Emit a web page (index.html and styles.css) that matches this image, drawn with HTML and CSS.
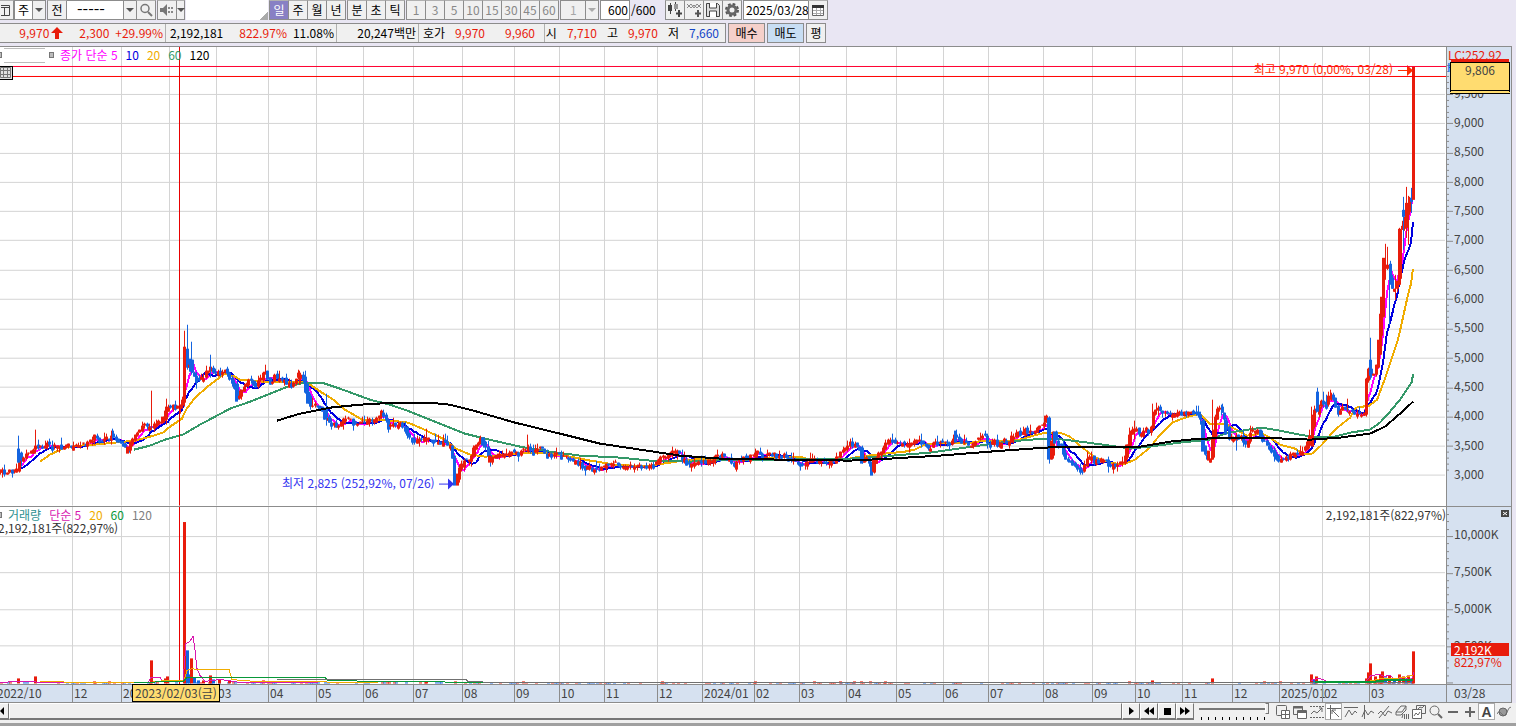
FILE: index.html
```html
<!DOCTYPE html>
<html lang="ko">

<head>
    <meta charset="UTF-8">
    <meta name="viewport" content="width=device-width, initial-scale=1.0">
    <title>종합차트</title>
    <link rel="stylesheet" href="styles.css">
</head>

<body>
    <div class="toolbar">
        <button class="btn half" aria-label="창"><svg width="12" height="14"><path d="M0 2.500H8.500V12.500H0M0 4.500H8M3.500 4V12" fill="none" stroke="#444"/></svg></button>
        <div class="group">
            <label class="combo combo-week"><select aria-label="종목 구분"><option>주</option></select><i class="arrow"></i></label>
        </div>
        <button class="btn">전</button>
        <div class="group code-group">
            <label class="combo combo-code"><select aria-label="종목 코드"><option>-----</option></select><i class="arrow"></i></label>
            <button class="btn" aria-label="검색"><svg width="14" height="14"><circle cx="6" cy="5.500" r="4" fill="none" stroke="#777" stroke-width="1.500"/><path d="M9 9l4 4" stroke="#777" stroke-width="2"/></svg></button>
        </div>
        <div class="group sound-group">
            <button class="btn" aria-label="소리"><svg width="14" height="14"><path d="M0 5h3l4-4v12l-4-4H0z" fill="#777"/><path d="M9 4v2M9 8v2M12 4v2M12 8v2" stroke="#888" stroke-width="2"/></svg></button>
            <button class="btn thin" aria-label="소리 선택"><i class="arrow"></i></button>
        </div>
        <div class="name-box"></div>
        <div class="group">
            <button class="btn on">일</button><button class="btn">주</button><button class="btn">월</button><button class="btn">년</button>
        </div>
        <div class="group">
            <button class="btn">분</button><button class="btn">초</button><button class="btn">틱</button>
        </div>
        <div class="group minutes">
            <button class="btn">1</button><button class="btn">3</button><button class="btn">5</button><button class="btn">10</button><button class="btn">15</button><button class="btn">30</button><button class="btn">45</button><button class="btn">60</button>
        </div>
        <label class="combo combo-tick"><select aria-label="분 선택" disabled><option>1</option></select><i class="arrow"></i></label>
        <div class="count">
            <input type="text" id="count" value="600"><label for="count">/600</label>
        </div>
        <div class="group icons">
            <button class="btn" aria-label="차트 종류"><svg width="16" height="16"><path d="M3.500 1v11M8.500 0v9" stroke="#444"/><path d="M2 3h3v6H2zM1 3h4v6H1z" fill="#444"/><path d="M7 2h4v5H7z" fill="#999"/><path d="M12 8v7M9 11.500h6" stroke="#444" stroke-width="2"/></svg></button><button class="btn" aria-label="지표 추가"><svg width="16" height="16"><path d="M1 6l4-4 3 4 3-4 4 4M1 2l4 4 3-3 3 3 4-4" fill="none" stroke="#888"/><path d="M12 8v7M9 11.500h6" stroke="#555" stroke-width="2"/></svg></button><button class="btn" aria-label="저장"><svg width="16" height="16"><path d="M1.500 1.500h11l2 2v11h-13z" fill="#ddd" stroke="#444"/><path d="M4.500 1v5h7V1M4.500 15V9h7v6" fill="#fff" stroke="#444"/></svg></button><button class="btn" aria-label="설정"><svg width="16" height="16"><circle cx="8" cy="8" r="6" fill="none" stroke="#555" stroke-width="2" stroke-dasharray="2.700 2"/><circle cx="8" cy="8" r="4" fill="none" stroke="#666" stroke-width="3"/></svg></button>
        </div>
        <div class="group date-group">
            <input type="text" class="date" aria-label="날짜" value="2025/03/28"><button class="btn" aria-label="달력"><svg width="14" height="14"><path d="M1.500 2.500h11v10h-11z" fill="#fff" stroke="#666"/><path d="M1 3.500h12" stroke="#333" stroke-width="3"/><path d="M2 7.500h10M2 10.500h10M5.500 5v7M9.500 5v7" stroke="#aaa"/></svg></button>
        </div>
    </div>

    <div class="quote">
        <div class="quote-box">
            <div class="cell cell-price"><b class="up">9,970</b><svg class="up-arrow" width="12" height="13"><path d="M6 0l6 6H8v6H4V6H0z" fill="#e81c0c"/></svg><b class="up">2,300</b><b class="up">+29.99%</b></div>
            <div class="cell cell-volume"><b>2,192,181</b><b class="up">822.97%</b><b>11.08%</b></div>
            <div class="cell cell-amount"><b>20,247백만</b></div>
            <div class="cell cell-ask"><b>호가</b><b class="up">9,970</b><b class="up">9,960</b></div>
            <div class="cell cell-ohlc"><b>시</b><b class="up">7,710</b><b>고</b><b class="up">9,970</b><b>저</b><b class="down">7,660</b></div>
        </div>
        <button class="trade buy">매수</button>
        <button class="trade sell">매도</button>
        <button class="trade avg">평</button>
    </div>

    <main class="chart">
        <section class="panel price">
            <div class="plot">
                <svg id="price" viewBox="0 47 1446 459" preserveAspectRatio="none"></svg>
                <div class="legend">
                    <i class="sq"></i><span class="blank"></span><i class="sq"></i>
                    <span class="m5">종가 단순 5</span><span class="m10">10</span><span class="m20">20</span><span class="m60">60</span><span>120</span>
                </div>
                <button class="grid-btn" aria-label="표"><svg width="11" height="11"><path d="M.500 .500h10v10H.500zM0 3.500h11M0 7.500h11M3.500 0v11M7.500 0v11" fill="none" stroke="#777"/></svg></button>
                <div class="note high">최고 9,970 (0,00%, 03/28)</div>
                <div class="note low">최저 2,825 (252,92%, 07/26)</div>
            </div>
            <div class="axis">
                <svg id="priceTicks" viewBox="0 47 8 459" preserveAspectRatio="none"></svg>
                <div class="labels price-labels">
                    <span>9,500</span><span>9,000</span><span>8,500</span><span>8,000</span><span>7,500</span><span>7,000</span><span>6,500</span><span>6,000</span><span>5,500</span><span>5,000</span><span>4,500</span><span>4,000</span><span>3,500</span><span>3,000</span>
                </div>
                <div class="lc">LC:252.92</div>
                <div class="hc">HC</div>
                <div class="last">9,970</div>
                <div class="cursor-price">9,806</div>
            </div>
        </section>

        <section class="panel volume">
            <div class="plot">
                <svg id="volume" viewBox="0 507 1446 177" preserveAspectRatio="none"></svg>
                <div class="legend">
                    <i class="sq"></i><span class="vname">거래량</span><span class="v5">단순 5</span><span class="m20">20</span><span class="v60">60</span><span class="v120">120</span>
                </div>
                <div class="vol-text left">2,192,181주(822,97%)</div>
                <div class="vol-text right">2,192,181주(822,97%)</div>
            </div>
            <div class="axis">
                <svg id="volumeTicks" viewBox="0 507 8 177" preserveAspectRatio="none"></svg>
                <div class="labels volume-labels">
                    <span>10,000K</span><span>7,500K</span><span>5,000K</span><span>2,500K</span>
                </div>
                <button class="close" aria-label="닫기"><svg width="8" height="7"><path d="M2 2l4 3M6 2L2 5" stroke="#fff"/></svg></button>
                <div class="vol-last">2,192K</div>
                <div class="vol-rate">822,97%</div>
            </div>
        </section>

        <section class="time">
            <div class="months">
                <span>2022/10</span><span>12</span><span>2023</span><span>02</span><span>03</span><span>04</span><span>05</span><span>06</span><span>07</span><span>08</span><span>09</span><span>10</span><span>11</span><span>12</span><span>2024/01</span><span>02</span><span>03</span><span>04</span><span>05</span><span>06</span><span>07</span><span>08</span><span>09</span><span>10</span><span>11</span><span>12</span><span>2025/01</span><span>02</span><span>03</span>
                <div class="cursor-date">2023/02/03(금)</div>
            </div>
            <div class="today">03/28</div>
        </section>
    </main>

    <footer class="bottom">
        <button class="scroll-left" aria-label="왼쪽"><svg width="6" height="8"><path d="M4 0v8L0 4z"/></svg></button>
        <div class="thumb"></div>
        <div class="play">
            <button aria-label="재생"><svg width="12" height="10"><path d="M4 1l5 4-5 4z"/></svg></button><button aria-label="뒤로"><svg width="12" height="10"><path d="M6 1v8L1 5zM11 1v8L6 5z"/></svg></button><button aria-label="정지"><svg width="12" height="10"><path d="M3 2h7v7H3z"/></svg></button><button aria-label="앞으로"><svg width="12" height="10"><path d="M1 1l5 4-5 4zM6 1l5 4-5 4z"/></svg></button>
        </div>
        <div class="speed">
            <input type="range" min="0" max="10" value="10" aria-label="속도">
            <div class="marks"></div>
        </div>
        <div class="tools">
            <button aria-label="새 창"><svg viewBox="0 0 14 14"><rect x=".500" y=".500" width="10" height="10" rx="1"/><path d="M5.500 5.500h8v8h-8zM9.500 6v7M6 9.500h7" fill="#fff"/></svg></button>
            <button aria-label="겹치기"><svg viewBox="0 0 14 14"><path d="M.500 1.500h9v8h-9z"/><path d="M4.500 5.500h9v8h-9z" fill="#fff"/><path d="M0 2.500h10M5 7h8" stroke-width="2"/></svg></button>
            <button aria-label="구간"><svg viewBox="0 0 14 14"><path d="M0 1.500h14M0 12.500h14" stroke-dasharray="2 1"/><path d="M1 9l3-3 3 2 5-5M12 3v4M12 3H9"/></svg></button>
            <button class="on" aria-label="십자선"><svg viewBox="0 0 14 14"><path d="M0 3.500h14M3.500 0v14M5 5l7 7M5 5v4M5 5h4"/></svg></button>
            <button aria-label="수평선"><svg viewBox="0 0 14 14"><path d="M0 2.500h14M1 12l4-7 3 5 3-4 2 2"/></svg></button>
            <button aria-label="수직선"><svg viewBox="0 0 14 14"><path d="M3.500 0v14M1 12l3-7 3 5 3-4 3 2"/></svg></button>
            <button aria-label="추세선"><svg viewBox="0 0 14 14"><path d="M1 13L11 1M0 9l3-3 4 5 3-5 4 2"/></svg></button>
            <button aria-label="모두 지우기"><svg viewBox="0 0 14 14"><path d="M1 7l5-6h5L7 7zM1 7v3h5l5-5V1M9.500 9v5M11.500 9v5M13.500 9v5M7 13l1-4"/></svg></button>
            <button aria-label="겹쳐 보기"><svg viewBox="0 0 14 14"><path d="M4.500 .500h9v8h-9z"/><path d="M.500 4.500h9v9h-9z" fill="#fff"/><path d="M2 11l2-3 2 2 2-3M6 4l2-2 2 1 2-2"/></svg></button>
            <button aria-label="돋보기"><svg viewBox="0 0 14 14"><circle cx="5.500" cy="5.500" r="4.500"/><path d="M9 9l4 4" stroke-width="2"/></svg></button>
            <button aria-label="축소"><svg viewBox="0 0 14 14"><path d="M2 7h10" stroke-width="2"/></svg></button>
            <button aria-label="확대"><svg viewBox="0 0 14 14"><path d="M2 7h10M7 2v10" stroke-width="2"/></svg></button>
            <button class="on letter">A</button>
            <button aria-label="표시"><svg viewBox="0 0 14 14"><circle cx="6" cy="7" r="4" fill="#999"/><path d="M0 9c3-7 6 6 9 0s4-8 5-6"/></svg></button>
        </div>
    </footer>

    <script src="app.js"></script>
</body>

</html>
```
FILE: styles.css
```css
* {
    box-sizing: border-box;
    margin: 0;
    padding: 0;
}

body,
button,
input,
select {
    font-family: "Noto Sans CJK KR", sans-serif;
    font-size: 12px;
    line-height: 16px;
    color: #000;
}

body {
    display: flex;
    flex-direction: column;
    height: 100vh;
    background-color: #e9e6f3;
    overflow: hidden;
}

b {
    font-weight: normal;
}

/* top toolbar */
.toolbar {
    display: flex;
    height: 20px;
    gap: 1px;
}

.group,
.combo,
.count {
    display: flex;
    height: 20px;
}

.btn {
    display: flex;
    align-items: center;
    justify-content: center;
    flex: none;
    width: 20px;
    height: 20px;
    margin-right: -1px;
    background-color: #f0f0f0;
    border: 1px solid #8c8c8c;
    border-top-color: #b0b0b0;
}

.btn.on {
    background-color: #8880c4;
    color: #fff;
}

.half {
    width: 14px;
    border-left: 0;
}

.thin {
    width: 9px;
}

.group .btn:last-child {
    margin-right: 0;
}

.combo {
    position: relative;
    background-color: #fff;
    border: 1px solid #8c8c8c;
}

.combo select {
    width: 100%;
    appearance: none;
    background: none;
    border: 0;
    padding-left: 3px;
}

.combo .arrow {
    position: absolute;
    top: 0;
    right: 0;
    width: 13px;
    height: 18px;
    background-color: #f0f0f0;
    border-left: 1px solid #8c8c8c;
}

.arrow::after {
    content: "";
    display: block;
    border: 4px solid transparent;
    border-top-color: #555;
    border-bottom: 0;
}

.combo .arrow::after {
    margin: 7px 2px;
}

.combo-week {
    width: 32px;
}

.combo-code {
    width: 69px;
    border-right: 0;
    border-left: 0;
}

.combo-code select {
    padding: 0 0 8px 10px;
    font-size: 16px;
}

.combo-tick {
    width: 39px;
    background-color: #f0f0f0;
}

.combo-tick select {
    padding-left: 9px;
    color: #888;
}

.combo-tick .arrow::after {
    border-top-color: #aaa;
}

.name-box {
    width: 82px;
    background: linear-gradient(135deg, transparent 50%, #aaa 50%) no-repeat right bottom / 8px 8px #fff;
}

.minutes .btn {
    color: #888;
}

.count input {
    width: 30px;
    border: 1px solid #8c8c8c;
    text-align: right;
    padding-right: 1px;
}

.count label {
    width: 34px;
    line-height: 20px;
    padding-left: 1px;
}

.date {
    width: 65px;
    border: 1px solid #8c8c8c;
    border-right: 0;
    padding-left: 2px;
}

/* quote row */
.quote {
    display: flex;
    gap: 2px;
    height: 26px;
    padding: 3px 0 3px;
}

.quote-box {
    display: flex;
    width: 726px;
    background-color: #f0f0f0;
    border: 1px solid #8c8c8c;
    border-left: 0;
}

.cell {
    display: flex;
    align-items: center;
    justify-content: flex-end;
    flex: none;
    border-right: 1px solid #b0b0b0;
    padding-right: 2px;
    white-space: nowrap;
}

.cell:last-child {
    border-right: 0;
}

.cell-price {
    width: 166px;
    gap: 6px;
}

.up-arrow {
    margin: 0 10px 0 -4px;
}

.cell-volume {
    width: 171px;
    gap: 6px;
}

.cell-volume b:first-child {
    margin-right: 10px;
}

.cell-amount {
    width: 82px;
}

.cell-ask {
    width: 126px;
    gap: 20px;
    padding-right: 9px;
}

.cell-ask b:first-child {
    margin-right: -10px;
}

.cell .down {
    color: #1446c8;
}

.cell-ohlc {
    flex: 1;
    gap: 10px;
    padding-right: 6px;
}

.up {
    color: #e81c0c;
}

.trade {
    width: 37px;
    border: 1px solid #8c8c8c;
}

.buy {
    background-color: #f5d0ca;
}

.sell {
    background-color: #c8def4;
}

.avg {
    width: 20px;
    background-color: #f0f0f0;
}

/* chart */
.chart {
    flex: 1;
    display: flex;
    flex-direction: column;
    min-height: 0;
    margin-right: 4px;
    background-color: #fff;
    border-top: 1px solid #8c8c8c;
    border-right: 1px solid #8c8c8c;
}

.panel {
    display: flex;
    min-height: 0;
    border-bottom: 1px solid #8c8c8c;
}

.price {
    flex: 460 1 0;
}

.volume {
    flex: 178 1 0;
}

.plot {
    position: relative;
    flex: 1;
    min-width: 0;
}

.plot > svg {
    position: absolute;
    width: 100%;
    height: 100%;
}

.axis {
    position: relative;
    width: 65px;
    background-color: #d6e1f0;
    border-left: 1px solid #8c8c8c;
    color: #444;
}

.axis > svg {
    position: absolute;
    width: 8px;
    height: 100%;
}

.labels {
    display: flex;
    flex-direction: column;
    height: 100%;
    padding-left: 7px;
}

.labels span {
    flex: 1;
    display: flex;
    align-items: center;
}

.price-labels {
    padding-top: 31px;
    padding-bottom: 17px;
}

.volume-labels {
    padding-top: 9px;
    padding-bottom: 21px;
}

.legend {
    position: absolute;
    top: 0;
    left: 0;
    display: flex;
    align-items: center;
    gap: 8px;
    height: 16px;
    white-space: nowrap;
}

.sq {
    width: 5px;
    height: 6px;
    margin-right: -2px;
    background-color: #bbb;
    border: 1px solid #777;
}

.legend .sq:first-child {
    width: 2px;
    border-left: 0;
    margin-right: -6px;
}

.blank {
    width: 41px;
    height: 15px;
    background-color: #fff;
    border-top: 1px solid #bbb;
    border-bottom: 1px solid #bbb;
    margin-right: -4px;
}

.m5 {
    color: #ff00ff;
}

.m10 {
    color: #0000e0;
}

.m20 {
    color: #f0ac00;
}

.m60 {
    color: #349868;
}

.vname {
    color: #2c9090;
    margin-left: 4px;
}

.v5 {
    color: #d818b0;
}

.v60 {
    color: #089838;
}

.v120 {
    color: #808080;
}

.grid-btn {
    position: absolute;
    top: 19px;
    left: 0;
    display: flex;
    width: 13px;
    height: 14px;
    background-color: #e0e0e0;
    border: 1px solid #000;
    border-left: 0;
}

.note {
    position: absolute;
    white-space: nowrap;
}

.high {
    top: 14px;
    right: 53px;
    color: #ff2c00;
}

.low {
    top: 428px;
    left: 282px;
    color: #3434f0;
}

.vol-text {
    position: absolute;
    color: #333;
}

.vol-text.left {
    top: 13px;
    left: -2px;
}

.vol-text.right {
    top: 0;
    right: 0;
}

.lc,
.hc,
.last,
.cursor-price,
.close,
.vol-last,
.vol-rate {
    position: absolute;
}

.lc {
    top: 0;
    left: 1px;
    color: #e81c0c;
}

.hc {
    top: 12px;
    left: 0;
    color: #0060e8;
}

.last {
    top: 12px;
    left: 4px;
    width: 58px;
    height: 14px;
    background-color: #e81c0c;
    color: #fff;
    padding-left: 3px;
}

.cursor-price {
    top: 15px;
    left: 3px;
    width: 60px;
    height: 32px;
    background-color: #ffdc70;
    border: 1px solid #000;
    border-bottom: 4px double #000;
    text-align: center;
    line-height: 14px;
}

.close {
    top: 3px;
    right: 2px;
    display: flex;
    width: 8px;
    height: 7px;
    background-color: #444;
    border: 0;
}

.vol-last {
    top: 136px;
    left: 4px;
    width: 58px;
    height: 13px;
    background-color: #e81c0c;
    color: #fff;
    padding-left: 3px;
    line-height: 13px;
}

.vol-rate {
    top: 147px;
    left: 7px;
    color: #e81c0c;
}

/* time axis */
.time {
    display: flex;
    height: 18px;
    background-color: #d6e1f0;
    border-bottom: 1px solid #8c8c8c;
    color: #444;
}

.months {
    position: relative;
    flex: 1;
    display: grid;
    grid-template-columns: 72fr 49fr 48fr 47fr 52fr 48fr 47fr 50fr 49fr 52fr 45fr 45fr 53fr 45fr 52fr 45fr 47fr 50fr 47fr 45fr 55fr 49fr 43fr 47fr 50fr 47fr 43fr 47fr 77fr;
}

.months span {
    min-width: 0;
    white-space: nowrap;
    padding-left: 1px;
    border-left: 1px solid #8c8c8c;
}

.months span:first-child {
    border: 0;
    text-indent: -4px;
}

.cursor-date {
    position: absolute;
    top: -1px;
    left: 132px;
    width: 88px;
    height: 18px;
    background-color: #ffdc70;
    border: 1px solid #000;
    text-align: center;
    white-space: nowrap;
}

.today {
    width: 65px;
    border-left: 1px solid #8c8c8c;
    padding-left: 7px;
}

/* scroll bar and tools */
.bottom {
    display: flex;
    height: 23px;
    padding-right: 4px;
    background-color: #f0f0f0;
    border-bottom: 3px solid #a0a0a0;
}

.scroll-left,
.play button {
    display: flex;
    align-items: center;
    justify-content: center;
    height: 17px;
    background-color: #f0f0f0;
    border: 1px solid #fff;
    border-right-color: #777;
    border-bottom: 2px solid #777;
}

.scroll-left {
    width: 9px;
    justify-content: flex-start;
    border-left: 0;
}

.thumb {
    flex: 1;
    height: 17px;
    border: 1px solid #fff;
    border-right-color: #777;
    border-bottom: 2px solid #777;
}

.play {
    display: flex;
}

.play button {
    width: 18px;
}

.speed {
    width: 70px;
    margin: 0 5px;
}

.speed input {
    display: block;
    appearance: none;
    width: 100%;
    height: 11px;
    background: linear-gradient(#777, #777) no-repeat 0 5px / 100% 2px;
}

.speed input::-webkit-slider-thumb {
    appearance: none;
    width: 4px;
    height: 11px;
    background-color: #eee;
    border: 1px solid #777;
    border-left-color: #fff;
}

.marks {
    height: 3px;
    margin: 3px 2px 0;
    background: repeating-linear-gradient(90deg, #000 0 1px, transparent 1px 7px);
}

.tools {
    display: flex;
}

.tools button {
    display: flex;
    align-items: center;
    justify-content: center;
    width: 17px;
    height: 17px;
    background: none;
    border: 0;
}

.tools .on {
    background-color: #fff;
    border: 1px solid #aaa;
}

.tools svg {
    width: 14px;
    height: 14px;
    flex: none;
    fill: none;
    stroke: #666;
}

.tools .letter {
    font-family: "Liberation Sans", sans-serif;
    font-weight: bold;
    font-size: 14px;
    color: #444;
}
```
FILE: app.js
```js
const RED = "#e81c0c";
const BLUE = "#1464e0";
const COUNT = 600;
const STEP = 2.368;
const BASE = 682;

const price = document.getElementById("price");
const volume = document.getElementById("volume");

// month lines
const months = [72, 121, 169, 216, 268, 316, 363, 413, 462, 514, 559, 604, 657, 702, 754, 799, 846, 896, 943, 988, 1043, 1092, 1135, 1182, 1232, 1279, 1322, 1369];
const priceLines = [94, 123, 153, 182, 211, 240, 270, 299, 329, 358, 387, 417, 446, 475];
const volumeLines = [536, 572, 609, 645];

// closing line of the candles, x y pairs
const closes = [0,472, 5,473, 10,472, 14,471, 17,470, 18,450, 20,463, 22,459, 26,456, 30,453, 35,449, 38,448, 42,446, 46,445, 52,446, 60,446, 68,447, 75,447, 83,446, 88,442, 95,438, 102,442, 108,440, 112,437, 116,441, 120,443, 124,447, 127,454, 130,445, 134,438, 138,434, 142,427, 147,427, 151,427, 156,424, 162,421, 166,408, 170,407, 174,407, 178,409, 181,405, 183,400, 184.5,347, 187,366, 189,362, 191,372, 194,378, 199,384, 203,378, 209,370, 213,372, 220,374, 225,369, 230,379, 234,386, 236,402, 240,396, 245,387, 250,380, 256,388, 262,375, 266,373, 270,385, 275,377, 282,380, 287,386, 293,384, 299,374, 303,380, 306,396, 310,405, 316,405, 322,415, 330,423, 338,426, 343,419, 350,421, 357,426, 366,422, 374,421, 381,413, 388,426, 396,424, 403,427, 406,434, 411,440, 416,442, 423,442, 427,439, 435,443, 443,444, 450,448, 453,462, 455,486, 457,480, 458,470, 461,466, 466,461, 470,460, 473,448, 479,441, 482,440, 486,450, 489,461, 495,458, 503,458, 508,452, 515,455, 522,452, 527,448, 533,453, 541,450, 548,457, 556,455, 563,459, 571,461, 579,464, 585,470, 592,470, 596,473, 600,469, 607,465, 614,462, 620,469, 630,466, 640,466, 650,466, 658,461, 665,457, 673,450, 678,454, 683,461, 690,464, 700,463, 708,463, 715,458, 722,457, 730,460, 733,466, 740,460, 748,460, 756,452, 763,457, 770,455, 778,456, 788,459, 795,462, 804,466, 812,461, 820,464, 830,464, 836,459, 842,452, 848,445, 855,445, 860,450, 862,463, 867,458, 872,473, 874,460, 880,455, 885,442, 892,443, 900,443, 905,448, 912,443, 918,441, 924,446, 928,452, 934,442, 945,444, 951,443, 954,434, 960,442, 970,446, 978,440, 984,436, 988,448, 995,442, 998,451, 1003,443, 1010,441, 1017,433, 1025,431, 1033,434, 1040,428, 1047,418, 1049,460, 1051,458, 1053,433, 1057,446, 1061,448, 1065,458, 1070,462, 1077,467, 1081,473, 1085,465, 1090,456, 1095,463, 1103,460, 1110,467, 1117,467, 1123,462, 1127,445, 1130,432, 1135,429, 1140,437, 1145,430, 1150,430, 1153,415, 1157,408, 1162,413, 1168,417, 1175,414, 1185,413, 1192,413, 1197,417, 1201,420, 1203,452, 1208,461, 1211,458, 1213,425, 1217,410, 1221,412, 1225,425, 1229,438, 1236,438, 1240,437, 1246,450, 1250,433, 1257,430, 1262,441, 1268,446, 1274,455, 1279,461, 1285,458, 1290,457, 1297,454, 1303,451, 1307,444, 1311,430, 1314,412, 1317,410, 1320,403, 1323,400, 1326,408, 1330,394, 1334,402, 1337,412, 1343,410, 1349,410, 1356,415, 1360,416, 1364,413, 1366,382, 1369,365, 1371,376, 1375,370, 1378,352, 1381,300, 1383,260, 1386,268, 1388,266, 1390,282, 1393,292, 1397,285, 1399,230, 1403,222, 1406,215, 1408,200, 1411,201, 1413,200];

// long wicks: x, top, bottom, colour
const wicks = [[18, 436, 463, BLUE], [35, 430, 450, RED], [112, 429, 440, BLUE], [151, 391, 430, RED], [166, 399, 425, RED], [184, 331, 402, RED], [187, 325, 366, BLUE], [191, 342, 375, BLUE], [210, 355, 378, BLUE], [299, 371, 385, RED], [326, 394, 426, BLUE], [426, 429, 445, RED], [527, 435, 452, RED], [1049, 417, 460, BLUE], [1087, 452, 465, RED], [1134, 421, 440, RED], [1152, 404, 425, RED], [1156, 403, 415, RED], [1212, 400, 450, RED], [1221, 405, 416, BLUE], [1236, 440, 451, BLUE], [1311, 407, 440, RED], [1317, 388, 412, BLUE], [1323, 392, 404, BLUE], [1330, 390, 400, RED], [1347, 399, 412, RED], [1370, 338, 380, BLUE], [1385, 244, 280, RED], [1387, 247, 270, RED], [1389, 267, 325, BLUE], [1395, 275, 300, RED], [1403, 197, 250, BLUE], [1406, 187, 238, RED], [1408, 196, 245, RED], [1411, 188, 213, BLUE]];

// large bodies: x, top, bottom, colour
const bodies = [[18, 449, 463, BLUE], [127, 447, 454, RED], [166, 408, 420, RED], [184, 347, 401, RED], [187, 350, 365, BLUE], [190, 359, 372, BLUE], [236, 386, 402, BLUE], [307, 384, 404, BLUE], [326, 408, 418, BLUE], [454, 462, 486, BLUE], [457, 474, 486, RED], [474, 446, 457, RED], [482, 438, 446, BLUE], [489, 456, 463, RED], [861, 447, 464, BLUE], [871, 462, 476, BLUE], [873, 460, 472, RED], [955, 431, 443, BLUE], [1048, 418, 460, BLUE], [1051, 441, 460, RED], [1054, 432, 444, BLUE], [1126, 445, 460, RED], [1130, 431, 446, RED], [1153, 413, 429, RED], [1202, 421, 452, BLUE], [1208, 451, 461, RED], [1213, 430, 458, RED], [1225, 420, 435, BLUE], [1312, 415, 447, RED], [1317, 392, 412, BLUE], [1366, 381, 415, RED], [1370, 360, 376, BLUE], [1378, 340, 360, RED], [1381, 297, 336, RED], [1383, 258, 298, RED], [1390, 267, 283, BLUE], [1400, 230, 279, RED], [1403, 210, 217, BLUE], [1406, 203, 228, RED]];

const ma20 = [40,462, 50,455, 65,448, 80,446, 95,445, 115,443, 135,441, 150,437, 163,433, 170,427, 182,419, 186,410, 195,398, 210,385, 225,374, 235,377, 240,380, 255,381, 270,383, 285,382, 303,382, 310,385, 322,393, 332,399, 345,410, 362,420, 380,420, 400,422, 408,423, 420,428, 445,440, 456,449, 470,455, 485,457, 500,456, 525,453, 550,454, 570,457, 590,461, 615,465, 630,466, 650,466, 670,463, 690,460, 730,459, 750,460, 765,459, 785,457, 800,457, 810,460, 830,461, 845,460, 860,457, 885,454, 905,452, 915,450, 925,445, 950,443, 965,444, 985,441, 1005,442, 1020,440, 1030,437, 1045,433, 1060,433, 1070,437, 1080,446, 1095,458, 1110,463, 1123,465, 1135,460, 1150,448, 1160,435, 1172,423, 1185,418, 1200,414, 1210,424, 1225,424, 1236,430, 1247,436, 1262,434, 1270,438, 1280,445, 1295,449, 1303,454, 1312,454, 1322,445, 1335,430, 1350,418, 1356,408, 1369,406, 1377,400, 1385,379, 1398,340, 1408,295, 1411,284, 1413,269];
const ma60 = [134,450, 150,446, 165,440, 183,435, 200,425, 230,409, 250,402, 275,392, 290,386, 305,383, 322,383, 340,389, 370,400, 390,405, 410,412, 440,424, 465,434, 485,439, 520,447, 550,452, 580,456, 620,458, 650,461, 690,462, 740,460, 790,460, 850,459, 880,457, 930,453, 965,448, 1000,443, 1030,440, 1055,439, 1080,442, 1110,446, 1130,449, 1150,447, 1180,443, 1210,440, 1225,434, 1235,432, 1262,428, 1280,431, 1300,435, 1312,437, 1335,437, 1350,433, 1370,430, 1380,423, 1390,412, 1400,400, 1412,382, 1413,374];
const ma120 = [277,421, 300,414, 330,408, 360,405, 395,403, 430,403, 450,405, 470,410, 515,423, 560,434, 600,444, 640,450, 680,456, 720,459, 780,460, 850,461, 890,459, 940,456, 990,452, 1045,448, 1070,447, 1100,447, 1140,447, 1170,442, 1200,439, 1260,438, 1310,440, 1340,438, 1370,434, 1385,427, 1400,414, 1413,402];

// volume bars: x, height, colour
const bars = [[18, 5, RED], [35, 7, RED], [94, 2, RED], [109, 2, RED], [151, 23, RED], [165, 5, RED], [167, 7, RED], [184, 161, RED], [187, 33, BLUE], [189, 9, BLUE], [191, 25, RED], [194, 6, BLUE], [198, 3, BLUE], [203, 3, RED], [210, 8, RED], [213, 4, BLUE], [219, 4, RED], [229, 3, RED], [263, 3, RED], [426, 2, RED], [455, 2, RED], [523, 2, RED], [662, 2, RED], [755, 2, RED], [814, 2, RED], [840, 2, RED], [854, 2, RED], [861, 2, RED], [870, 2, RED], [885, 2, RED], [1129, 2, RED], [1152, 3, RED], [1212, 5, RED], [1264, 2, RED], [1280, 2, RED], [1311, 9, RED], [1314, 4, BLUE], [1316, 7, RED], [1366, 5, RED], [1368, 11, RED], [1370, 20, RED], [1375, 7, RED], [1380, 9, RED], [1382, 12, RED], [1385, 6, BLUE], [1389, 8, RED], [1394, 4, BLUE], [1399, 9, RED], [1403, 7, RED], [1406, 5, BLUE], [1408, 8, RED], [1411, 5, BLUE], [1413, 32, RED]];

function add(svg, tag, attrs) {
    const el = document.createElementNS("http://www.w3.org/2000/svg", tag);
    for (const key in attrs) {
        el.setAttribute(key, attrs[key]);
    }
    svg.appendChild(el);
}

function rect(svg, x, y, w, h, fill) {
    add(svg, "rect", { x: x, y: y, width: w, height: h, fill: fill });
}

function line(svg, points, color, width) {
    add(svg, "polyline", { points: points.join(" "), fill: "none", stroke: color, "stroke-width": width, "shape-rendering": "crispEdges" });
}

// fixed seed so that the chart looks the same on each load
let seed = 7;
function rnd() {
    seed = (seed * 16807) % 2147483647;
    return seed / 2147483647;
}

function closeAt(x) {
    for (let i = 2; i < closes.length; i += 2) {
        if (x <= closes[i]) {
            const t = (x - closes[i - 2]) / (closes[i] - closes[i - 2]);
            return closes[i - 1] + t * (closes[i + 1] - closes[i - 1]);
        }
    }
    return closes[closes.length - 1];
}

function grid(svg, lines, top, bottom) {
    lines.forEach((y) => rect(svg, 0, y, 1445, 1, "#d4d4d4"));
    months.forEach((x) => rect(svg, x, top, 1, bottom - top, "#d4d4d4"));
}

function average(ys, n, from) {
    const points = [];
    for (let i = from; i < COUNT; i++) {
        let sum = 0;
        for (let k = 0; k < n; k++) {
            sum += ys[i - k];
        }
        points.push(Math.round(-5 + i * STEP), Math.round(sum / n));
    }
    return points;
}

grid(price, priceLines, 47, 506);
grid(volume, volumeLines, 507, 684);

const ys = [];
for (let i = 0; i < COUNT; i++) {
    ys.push(closeAt(-5 + i * STEP) + (rnd() - 0.5) * 4);
}
ys[COUNT - 1] = 67;

line(price, average(ys, 5, 11), "#ff00ff", 2);
line(price, average(ys, 10, 11), "#0000e0", 2);
line(price, ma20, "#f0ac00", 2);
line(price, ma60, "#349868", 2);

for (let i = 2; i < COUNT - 1; i++) {
    const x = Math.round(-5 + i * STEP);
    const open = Math.round(ys[i - 1]);
    const close = Math.round(ys[i]);
    const color = close <= open ? RED : BLUE;
    const top = Math.min(open, close) - Math.round(rnd() * 2);
    const height = Math.max(Math.abs(open - close), 1) + Math.round(rnd() * 3);
    const up = Math.round(rnd() * rnd() * 8);
    const down = Math.round(rnd() * rnd() * 6);
    rect(price, x, top - up, 1, height + up + down, color);
    rect(price, x - 1, top, 3, height, color);
}
wicks.forEach((w) => rect(price, w[0], w[1], 1, w[2] - w[1], w[3]));
bodies.forEach((b) => rect(price, b[0] - 1, b[1], 3, b[2] - b[1], b[3]));
rect(price, 1412, 67, 3, 133, RED);
line(price, ma120, "#000", 2);

// marks of the highest and lowest price
rect(price, 1398, 70, 9, 1, "#ff2c00");
add(price, "path", { d: "M1407 65l6 5.500-6 5.500z", fill: "#ff2c00" });
rect(price, 439, 484, 10, 1, "#3434f0");
add(price, "path", { d: "M448 479l6 5.500-6 5.500z", fill: "#3434f0" });

// limit lines and crosshair
rect(price, 0, 66, 1446, 1, "#ff0030");
rect(price, 0, 76, 1446, 1, "#ff0000");
rect(price, 179, 47, 1, 459, "#e80000");
rect(volume, 179, 507, 1, 177, "#e80000");

for (let i = 2; i < COUNT; i++) {
    if (rnd() < 0.4) {
        rect(volume, Math.round(-5 + i * STEP), BASE, 3, 1, rnd() < 0.5 ? RED : BLUE);
    }
}
bars.forEach((b) => rect(volume, b[0] - 1, BASE + 1 - b[1], 3, b[1], b[2]));
line(volume, [0,682, 18,681, 50,682, 82,682, 148,682, 151,677, 160,677, 163,681, 183,681, 186,643, 190,641, 193,636, 195,650, 197,668, 200,675, 205,681, 220,679, 240,682, 318,682], "#d818b0", 1);
line(volume, [40,681, 82,682, 150,682, 165,680, 184,680, 187,670, 193,668, 195,669, 229,669, 232,679, 240,680, 257,681, 378,682], "#f0ac00", 1);
line(volume, [134,682, 183,681, 187,677, 325,677, 328,680, 378,681, 494,682], "#089838", 1);
line(volume, [277,679, 466,679, 468,681, 494,682, 1412,682], "#707070", 1);
line(volume, [1311,680, 1318,678, 1323,679, 1328,682, 1366,681, 1371,675, 1380,674, 1384,676, 1390,675, 1395,679, 1405,677, 1411,680, 1414,672], "#d818b0", 1);
line(volume, [1368,681, 1382,678, 1395,678, 1404,677, 1413,675], "#f0ac00", 1);
line(volume, [1315,682, 1368,682, 1385,680, 1413,680], "#089838", 2);

// axis ticks
function ticks(id, first, step, major, from, to) {
    const svg = document.getElementById(id);
    for (let i = -40; i < 100; i++) {
        const y = Math.round(first + i * step);
        if (y > from && y < to) {
            rect(svg, 0, y, i % major === 0 ? 6 : 2, 1, "#8c8c8c");
        }
    }
}
ticks("priceTicks", 94, 5.87, 5, 60, 476);
ticks("volumeTicks", 536, 7.3, 5, 507, 683);
```
